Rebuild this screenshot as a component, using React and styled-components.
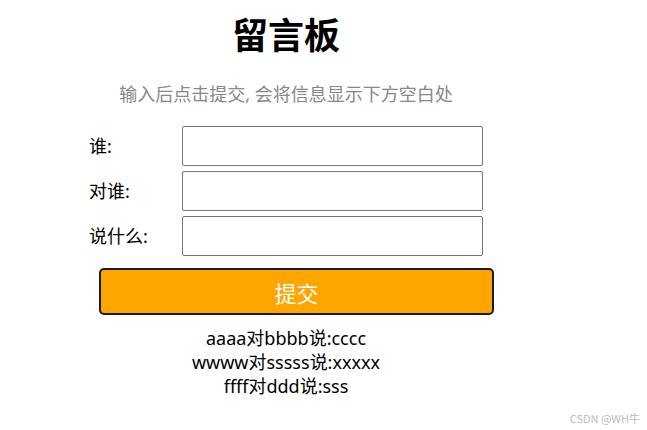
import React from "react";
import styled, { createGlobalStyle } from "styled-components";

const Global = createGlobalStyle`
  html, body { margin: 0; padding: 0; background: #fff; }
  body { font-family: "Noto Sans", "Noto Sans CJK SC", sans-serif; }
  * { box-sizing: border-box; }
`;

const Page = styled.div`
  position: relative;
  width: 647px;
  height: 430px;
  padding: 18px 0 0 86px;
`;

const Board = styled.div`
  width: 400px;
  display: flex;
  flex-direction: column;
`;

const Title = styled.h1`
  margin: 0;
  font-size: 36px;
  line-height: 36px;
  font-weight: 700;
  text-align: center;
  color: #000;
`;

const Hint = styled.p`
  margin: 28px 0 0;
  font-size: 18px;
  line-height: 24px;
  color: #888;
  text-align: center;
`;

const Form = styled.form`
  margin-top: 20px;
  display: flex;
  flex-direction: column;
  gap: 5px;
`;

const Row = styled.div`
  display: flex;
  align-items: center;
  padding-left: 3px;
`;

const Label = styled.label`
  width: 93px;
  font-size: 18px;
  line-height: 24px;
  color: #000;
`;

const Input = styled.input`
  width: 301px;
  height: 40px;
  border: 1px solid #767676;
  border-radius: 2px;
  padding: 0 6px;
  font-size: 16px;
  outline: none;
`;

const Submit = styled.button`
  margin: 12px 0 0 13px;
  width: 395px;
  height: 47px;
  background: #ffa500;
  border: 2px solid #1a1a1a;
  border-radius: 5px;
  color: #fff;
  font-family: "Noto Sans CJK SC", sans-serif;
  font-size: 22px;
  line-height: 1;
  cursor: pointer;
`;

const Messages = styled.div`
  margin-top: 11px;
  display: flex;
  flex-direction: column;
  align-items: center;
`;

const Message = styled.div`
  font-size: 18px;
  line-height: 24px;
  color: #000;
`;

const Watermark = styled.div`
  position: absolute;
  right: 7px;
  top: 410px;
  font-family: "Noto Sans CJK SC", sans-serif;
  font-size: 11px;
  line-height: 16px;
  color: #bbb;
`;

const messages = [
  { who: "aaaa", to: "bbbb", say: "cccc" },
  { who: "wwww", to: "sssss", say: "xxxxx" },
  { who: "ffff", to: "ddd", say: "sss" },
];

export default function App() {
  return (
    <Page>
      <Global />
      <Board>
        <Title>留言板</Title>
        <Hint>输入后点击提交, 会将信息显示下方空白处</Hint>
        <Form onSubmit={(e) => e.preventDefault()}>
          <Row>
            <Label>谁:</Label>
            <Input type="text" />
          </Row>
          <Row>
            <Label>对谁:</Label>
            <Input type="text" />
          </Row>
          <Row>
            <Label>说什么:</Label>
            <Input type="text" />
          </Row>
        </Form>
        <Submit type="button">提交</Submit>
        <Messages>
          {messages.map((m, i) => (
            <Message key={i}>
              {m.who}对{m.to}说:{m.say}
            </Message>
          ))}
        </Messages>
      </Board>
      <Watermark>CSDN @WH牛</Watermark>
    </Page>
  );
}
